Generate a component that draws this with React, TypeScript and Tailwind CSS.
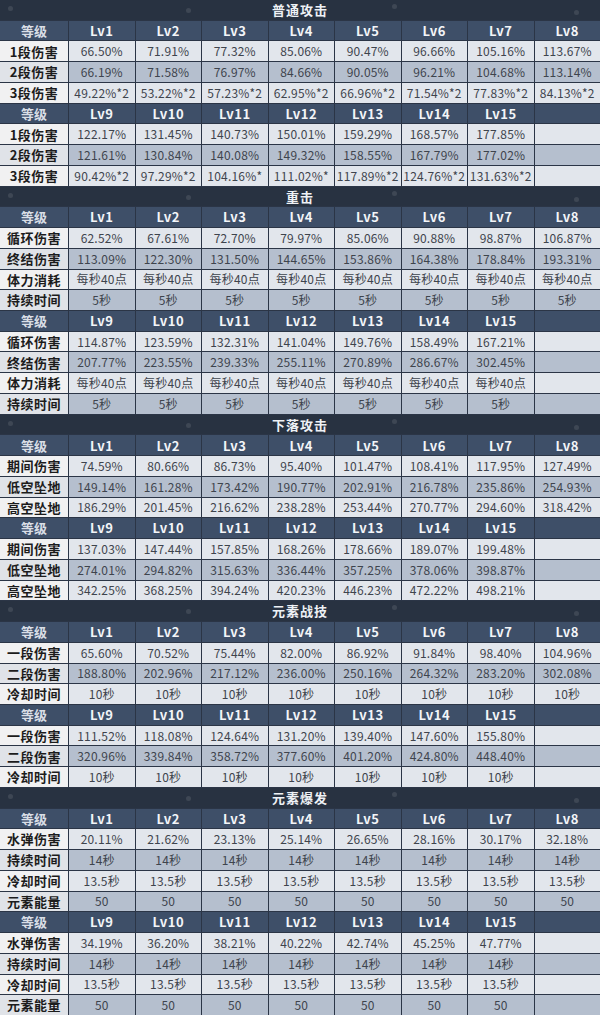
import React from "react";

type Block = { labels: string[]; rows: string[][] };
type Section = { title: string; a: Block; b: Block };

const rep = (v: string, n: number) => Array.from({ length: n }, () => v);

const sections: Section[] = [
  {
    title: "普通攻击",
    a: {
      labels: ["1段伤害", "2段伤害", "3段伤害"],
      rows: [
        ["66.50%", "71.91%", "77.32%", "85.06%", "90.47%", "96.66%", "105.16%", "113.67%"],
        ["66.19%", "71.58%", "76.97%", "84.66%", "90.05%", "96.21%", "104.68%", "113.14%"],
        ["49.22%*2", "53.22%*2", "57.23%*2", "62.95%*2", "66.96%*2", "71.54%*2", "77.83%*2", "84.13%*2"],
      ],
    },
    b: {
      labels: ["1段伤害", "2段伤害", "3段伤害"],
      rows: [
        ["122.17%", "131.45%", "140.73%", "150.01%", "159.29%", "168.57%", "177.85%"],
        ["121.61%", "130.84%", "140.08%", "149.32%", "158.55%", "167.79%", "177.02%"],
        ["90.42%*2", "97.29%*2", "104.16%*", "111.02%*", "117.89%*2", "124.76%*2", "131.63%*2"],
      ],
    },
  },
  {
    title: "重击",
    a: {
      labels: ["循环伤害", "终结伤害", "体力消耗", "持续时间"],
      rows: [
        ["62.52%", "67.61%", "72.70%", "79.97%", "85.06%", "90.88%", "98.87%", "106.87%"],
        ["113.09%", "122.30%", "131.50%", "144.65%", "153.86%", "164.38%", "178.84%", "193.31%"],
        rep("每秒40点", 8),
        rep("5秒", 8),
      ],
    },
    b: {
      labels: ["循环伤害", "终结伤害", "体力消耗", "持续时间"],
      rows: [
        ["114.87%", "123.59%", "132.31%", "141.04%", "149.76%", "158.49%", "167.21%"],
        ["207.77%", "223.55%", "239.33%", "255.11%", "270.89%", "286.67%", "302.45%"],
        rep("每秒40点", 7),
        rep("5秒", 7),
      ],
    },
  },
  {
    title: "下落攻击",
    a: {
      labels: ["期间伤害", "低空坠地", "高空坠地"],
      rows: [
        ["74.59%", "80.66%", "86.73%", "95.40%", "101.47%", "108.41%", "117.95%", "127.49%"],
        ["149.14%", "161.28%", "173.42%", "190.77%", "202.91%", "216.78%", "235.86%", "254.93%"],
        ["186.29%", "201.45%", "216.62%", "238.28%", "253.44%", "270.77%", "294.60%", "318.42%"],
      ],
    },
    b: {
      labels: ["期间伤害", "低空坠地", "高空坠地"],
      rows: [
        ["137.03%", "147.44%", "157.85%", "168.26%", "178.66%", "189.07%", "199.48%"],
        ["274.01%", "294.82%", "315.63%", "336.44%", "357.25%", "378.06%", "398.87%"],
        ["342.25%", "368.25%", "394.24%", "420.23%", "446.23%", "472.22%", "498.21%"],
      ],
    },
  },
  {
    title: "元素战技",
    a: {
      labels: ["一段伤害", "二段伤害", "冷却时间"],
      rows: [
        ["65.60%", "70.52%", "75.44%", "82.00%", "86.92%", "91.84%", "98.40%", "104.96%"],
        ["188.80%", "202.96%", "217.12%", "236.00%", "250.16%", "264.32%", "283.20%", "302.08%"],
        rep("10秒", 8),
      ],
    },
    b: {
      labels: ["一段伤害", "二段伤害", "冷却时间"],
      rows: [
        ["111.52%", "118.08%", "124.64%", "131.20%", "139.40%", "147.60%", "155.80%"],
        ["320.96%", "339.84%", "358.72%", "377.60%", "401.20%", "424.80%", "448.40%"],
        rep("10秒", 7),
      ],
    },
  },
  {
    title: "元素爆发",
    a: {
      labels: ["水弹伤害", "持续时间", "冷却时间", "元素能量"],
      rows: [
        ["20.11%", "21.62%", "23.13%", "25.14%", "26.65%", "28.16%", "30.17%", "32.18%"],
        rep("14秒", 8),
        rep("13.5秒", 8),
        rep("50", 8),
      ],
    },
    b: {
      labels: ["水弹伤害", "持续时间", "冷却时间", "元素能量"],
      rows: [
        ["34.19%", "36.20%", "38.21%", "40.22%", "42.74%", "45.25%", "47.77%"],
        rep("14秒", 7),
        rep("13.5秒", 7),
        rep("50", 7),
      ],
    },
  },
];

const rowGrid = "grid flex-1 min-h-0 grid-cols-[68px_repeat(8,minmax(0,1fr))] gap-px";

function TitleRow({ title }: { title: string }) {
  return (
    <div className="relative flex flex-1 min-h-0 items-center justify-center bg-[#283241]">
      <span className="absolute left-[8px] top-[6px] h-[5px] w-[5px] rounded-full bg-white/10" />
      <span className="absolute left-[186px] top-[8px] h-[5px] w-[5px] rounded-full bg-white/10" />
      <span className="absolute left-[392px] top-[4px] h-[5px] w-[5px] rounded-full bg-white/10" />
      <span className="absolute left-[574px] top-[10px] h-[5px] w-[5px] rounded-full bg-white/10" />
      <span className="text-[13px] font-bold tracking-[1px] text-[#eef1f5]">{title}</span>
    </div>
  );
}

function HeaderRow({ levels }: { levels: number[] }) {
  return (
    <div className={rowGrid}>
      <div className="flex items-center justify-center bg-[#3e4f68] text-[13px] font-bold text-[#d9dee6]">
        等级
      </div>
      {Array.from({ length: 8 }).map((_, i) => (
        <div
          key={i}
          className="flex items-center justify-center bg-[#3e4f68] text-[13px] font-bold tracking-[0.5px] text-[#f3f5f8]"
        >
          {levels[i] ? `Lv${levels[i]}` : ""}
        </div>
      ))}
    </div>
  );
}

function DataBlock({ block }: { block: Block }) {
  return (
    <>
      {block.rows.map((row, r) => {
        const dark = r % 2 === 1;
        return (
          <div key={r} className={rowGrid}>
            <div
              className={`flex items-center justify-center text-[13px] font-bold tracking-[0.5px] text-[#1c1c1c] ${
                dark ? "bg-[#e0e3e8]" : "bg-[#f1f1f2]"
              }`}
            >
              {block.labels[r]}
            </div>
            {Array.from({ length: 8 }).map((_, i) => (
              <div
                key={i}
                className={`flex items-center justify-center whitespace-nowrap text-[12px] tracking-[0.2px] text-[#3e444d] ${
                  dark ? "bg-[#b5bfce]" : "bg-[#e2e6ec]"
                }`}
              >
                {row[i] ?? ""}
              </div>
            ))}
          </div>
        );
      })}
    </>
  );
}

export default function App() {
  return (
    <div className="flex h-[1015px] w-[600px] flex-col gap-px overflow-hidden bg-[#2b3546] font-['Noto_Sans_CJK_SC',sans-serif]">
      {sections.map((s) => (
        <React.Fragment key={s.title}>
          <TitleRow title={s.title} />
          <HeaderRow levels={[1, 2, 3, 4, 5, 6, 7, 8]} />
          <DataBlock block={s.a} />
          <HeaderRow levels={[9, 10, 11, 12, 13, 14, 15]} />
          <DataBlock block={s.b} />
        </React.Fragment>
      ))}
    </div>
  );
}
